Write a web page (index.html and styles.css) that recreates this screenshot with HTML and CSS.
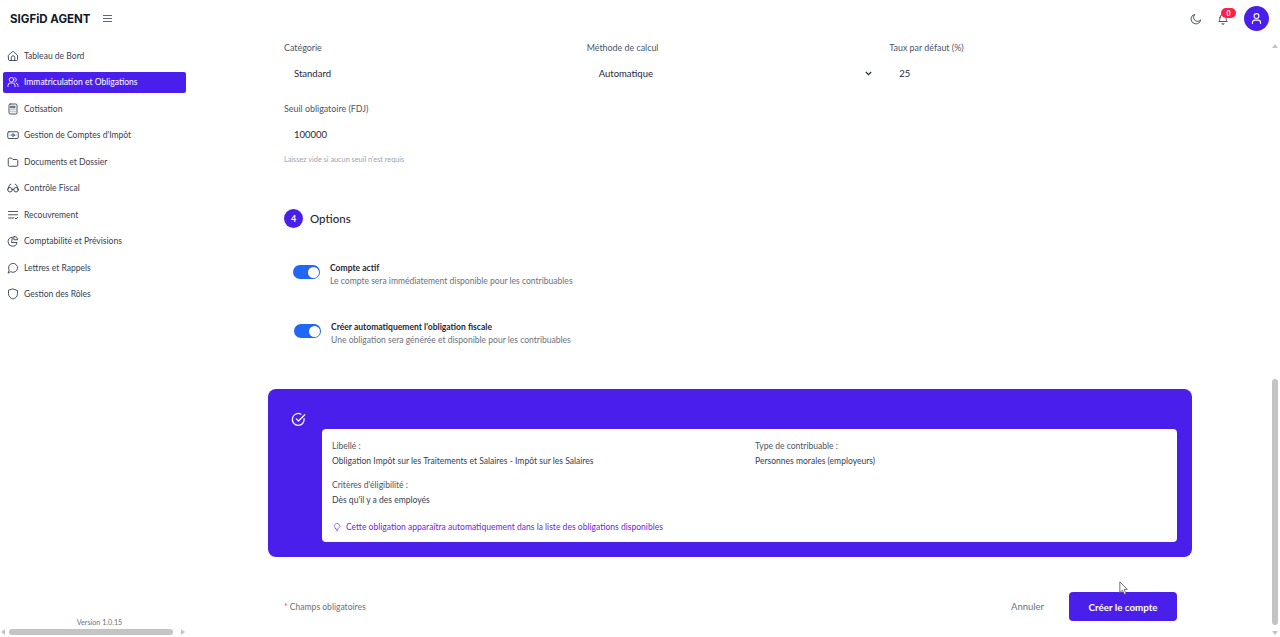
FILE: index.html
```html
<!DOCTYPE html>
<html lang="fr">
<head>
    <meta charset="UTF-8">
    <meta name="viewport" content="width=device-width, initial-scale=1.0">
    <title>SIGFiD Agent</title>
    <link rel="stylesheet" href="styles.css">
</head>
<body>
    <div class="app">
        <!-- Sidebar -->
        <aside class="sidebar">
            <div class="brand">
                <span class="brand-name">SIGFiD AGENT</span>
                <svg class="icon burger" viewBox="0 0 24 24"><path d="M3 5.500h18M3 12h18M3 18.500h18"/></svg>
            </div>
            <nav class="nav">
                <a class="nav-item"><svg class="icon" viewBox="0 0 24 24"><path d="M3 10.500l7.500-7a2.200 2.200 0 0 1 3 0l7.500 7V19a2 2 0 0 1-2 2H5a2 2 0 0 1-2-2z"/><path d="M8.500 21v-6a3.500 3.500 0 0 1 7 0v6"/></svg>Tableau de Bord</a>
                <a class="nav-item active"><svg class="icon" viewBox="0 0 24 24"><circle cx="9" cy="7.500" r="4.500"/><path d="M2 21v-2a5 5 0 0 1 5-5h4a5 5 0 0 1 5 5v2"/><path d="M15.500 3.200a4.500 4.500 0 0 1 0 8.600"/><path d="M18.500 14.300a5 5 0 0 1 3.500 4.700v2"/></svg>Immatriculation et Obligations</a>
                <a class="nav-item"><svg class="icon" viewBox="0 0 24 24"><rect x="4" y="2" width="16" height="20" rx="2.500"/><path d="M8 6.500h8v3H8zM8 13.500h.01M12 13.500h.01M16 13.500h.01M8 17.500h.01M12 17.500h.01M16 17.500h.01"/></svg>Cotisation</a>
                <a class="nav-item"><svg class="icon" viewBox="0 0 24 24"><rect x="1.500" y="5.500" width="21" height="13.500" rx="2.500"/><circle cx="12" cy="12.200" r="2.500"/><path d="M6 12.200h.01M18 12.200h.01"/></svg>Gestion de Comptes d'Impôt</a>
                <a class="nav-item"><svg class="icon" viewBox="0 0 24 24"><path d="M2.500 6a2 2 0 0 1 2-2h4.500l3 3h7.500a2 2 0 0 1 2 2v9.500a2 2 0 0 1-2 2h-15a2 2 0 0 1-2-2z"/></svg>Documents et Dossier</a>
                <a class="nav-item"><svg class="icon" viewBox="0 0 24 24"><circle cx="6" cy="15.500" r="4.500"/><circle cx="18" cy="15.500" r="4.500"/><path d="M10.500 15c1-.8 2-.8 3 0M1.500 15L5 6c.4-1 1.200-1.500 2.500-1.500M22.500 15L19 6c-.4-1-1.200-1.500-2.500-1.500"/></svg>Contrôle Fiscal</a>
                <a class="nav-item"><svg class="icon" viewBox="0 0 24 24"><path d="M3 5h18M3 11.500h18M3 18h10M16 18l2 2 3.500-3.500"/></svg>Recouvrement</a>
                <a class="nav-item"><svg class="icon" viewBox="0 0 24 24"><path d="M10 4.500a9 9 0 1 0 10 10.500H10z"/><path d="M14.500 2.500a7.500 7.500 0 0 1 7 7h-7z"/></svg>Comptabilité et Prévisions</a>
                <a class="nav-item"><svg class="icon" viewBox="0 0 24 24"><path d="M2.500 21.500l1.800-5.200a9 9 0 1 1 3.500 3.400z"/></svg>Lettres et Rappels</a>
                <a class="nav-item"><svg class="icon" viewBox="0 0 24 24"><path d="M12 2l9 3v6.500c0 5.200-3.700 8.900-9 10.500-5.300-1.600-9-5.300-9-10.500V5z"/></svg>Gestion des Rôles</a>
            </nav>
            <div class="version">Version 1.0.15</div>
            <div class="hscroll">
                <span class="arrow arrow-left"></span>
                <span class="hthumb"></span>
                <span class="arrow arrow-right"></span>
            </div>
        </aside>

        <div class="main">
            <!-- Top bar -->
            <header class="topbar">
                <svg class="icon moon" viewBox="0 0 24 24"><path d="M21 14.500A9.500 9.500 0 1 1 9.500 3a7.500 7.500 0 0 0 11.500 11.500z"/></svg>
                <span class="bell">
                    <svg class="icon" viewBox="0 0 24 24"><path d="M6 9a6 6 0 0 1 12 0c0 6 2.500 8 2.500 8h-17S6 15 6 9z"/><path d="M10 21a2 2 0 0 0 4 0"/></svg>
                    <span class="badge">0</span>
                </span>
                <span class="avatar">
                    <svg class="icon" viewBox="0 0 24 24"><circle cx="12" cy="7.500" r="4.500"/><path d="M4.500 21v-1a5 5 0 0 1 5-5h5a5 5 0 0 1 5 5v1"/></svg>
                </span>
            </header>

            <div class="content">
                <div class="form-section">
                    <div class="grid-3">
                        <div class="field">
                            <label>Catégorie</label>
                            <div class="value">Standard</div>
                        </div>
                        <div class="field">
                            <label>Méthode de calcul</label>
                            <div class="value value-select">Automatique
                                <svg class="chevron" viewBox="0 0 24 24"><path d="M5 8l7 7 7-7"/></svg>
                            </div>
                        </div>
                        <div class="field">
                            <label>Taux par défaut (%)</label>
                            <div class="value">25</div>
                        </div>
                    </div>
                    <div class="field threshold">
                        <label>Seuil obligatoire (FDJ)</label>
                        <div class="value">100000</div>
                        <p class="hint">Laissez vide si aucun seuil n'est requis</p>
                    </div>

                    <div class="step">
                        <span class="step-num">4</span>
                        <h2>Options</h2>
                    </div>

                    <div class="option">
                        <span class="toggle"></span>
                        <div>
                            <div class="option-title">Compte actif</div>
                            <div class="option-desc">Le compte sera immédiatement disponible pour les contribuables</div>
                        </div>
                    </div>
                    <div class="option option-second">
                        <span class="toggle"></span>
                        <div>
                            <div class="option-title">Créer automatiquement l'obligation fiscale</div>
                            <div class="option-desc">Une obligation sera générée et disponible pour les contribuables</div>
                        </div>
                    </div>
                </div>

                <!-- Recap panel -->
                <div class="panel">
                    <svg class="icon panel-icon" viewBox="0 0 24 24"><path d="M21 10.500a9.500 9.500 0 1 1-5-7"/><path d="M8.500 11l3.500 3.500L22 4.500"/></svg>
                    <div class="panel-card">
                        <div class="panel-grid">
                            <div>
                                <div class="panel-label">Libellé :</div>
                                <div class="panel-text">Obligation Impôt sur les Traitements et Salaires - Impôt sur les Salaires</div>
                            </div>
                            <div>
                                <div class="panel-label">Type de contribuable :</div>
                                <div class="panel-text">Personnes morales (employeurs)</div>
                            </div>
                        </div>
                        <div class="criteria">
                            <div class="panel-label">Critères d'éligibilité :</div>
                            <div class="panel-text">Dès qu'il y a des employés</div>
                        </div>
                        <div class="panel-note">
                            <svg class="icon" viewBox="0 0 24 24"><path d="M8.500 15.500a6.500 6.500 0 1 1 7 0c-.7.500-1 1-1 2h-5c0-1-.3-1.500-1-2z"/><path d="M10 21h4"/></svg>
                            Cette obligation apparaîtra automatiquement dans la liste des obligations disponibles
                        </div>
                    </div>
                </div>

                <div class="actions">
                    <span class="required"><span class="star">*</span> Champs obligatoires</span>
                    <span class="actions-right">
                        <button class="btn-cancel" type="button">Annuler</button>
                        <button class="btn-submit" type="button">Créer le compte</button>
                    </span>
                </div>
            </div>
        </div>
    </div>

    <!-- Window scrollbar and mouse pointer lie over the page -->
    <div class="vscroll">
        <span class="arrow arrow-up"></span>
        <span class="vthumb"></span>
        <span class="arrow arrow-down"></span>
    </div>
    <svg class="cursor" viewBox="0 0 12 18"><path d="M1 1v13l3-3 2.500 5 2-1-2.500-5h4z"/></svg>
</body>
</html>
```

FILE: styles.css
```css
* {
    box-sizing: border-box;
}
html, body {
    margin: 0;
    height: 100%;
    overflow: hidden;
}
body {
    font-family: Lato, "Open Sans", sans-serif;
    font-size: 8.550px;
    color: #374151;
    background-color: white;
}
.app {
    display: flex;
    height: 637px;
}
.icon {
    width: 12px;
    height: 12px;
    flex: none;
    fill: none;
    stroke: currentColor;
    stroke-width: 1.800;
    stroke-linecap: round;
    stroke-linejoin: round;
}

/* Sidebar */
.sidebar {
    width: 188px;
    flex: none;
    display: flex;
    flex-direction: column;
    padding-left: 3px;
}
.brand {
    display: flex;
    align-items: center;
    gap: 12px;
    height: 37px;
    padding-left: 7px;
}
.brand-name {
    font-family: Inter, sans-serif;
    font-size: 11.500px;
    font-weight: 700;
    color: #111827;
}
.burger {
    width: 11px;
    height: 11px;
    color: #374151;
}
.nav {
    display: flex;
    flex-direction: column;
    gap: 5.440px;
    margin-top: 8.500px;
    width: 183px;
}
.nav-item {
    display: flex;
    align-items: center;
    gap: 5px;
    height: 21px;
    padding-left: 4px;
    border-radius: 2px;
    color: #374151;
}
.nav-item.active {
    background-color: #4a1fec;
    color: white;
}
.version {
    margin-top: auto;
    width: 193px;
    padding-bottom: 2px;
    text-align: center;
    font-size: 7.200px;
    color: #6b7280;
}
.hscroll {
    display: flex;
    align-items: center;
    height: 6px;
    margin: 0 0 2px -3px;
    width: 190px;
    gap: 4px;
    padding-left: 1px;
}
.hthumb {
    width: 164px;
    height: 6px;
    border-radius: 3px;
    background-color: #c4c4c4;
}
.arrow {
    width: 0;
    height: 0;
    border: 3px solid transparent;
    flex: none;
}
.arrow-left {
    border-left-width: 0;
    border-right: 4px solid #c4c4c4;
}
.arrow-right {
    border-right-width: 0;
    border-left: 4px solid #c4c4c4;
    margin-left: 4px;
}

/* Main column */
.main {
    flex: 1;
    min-width: 0;
    display: flex;
    flex-direction: column;
}
.topbar {
    display: flex;
    align-items: center;
    justify-content: flex-end;
    height: 37px;
    padding-right: 11px;
    color: #374151;
}
.moon {
    margin-right: 15px;
}
.bell {
    position: relative;
    display: flex;
    margin-right: 15px;
}
.badge {
    position: absolute;
    top: -5px;
    left: 4px;
    width: 15px;
    height: 10px;
    border-radius: 5px;
    background-color: #ff1f47;
    color: white;
    font-size: 7px;
    font-weight: 700;
    line-height: 10px;
    text-align: center;
}
.avatar {
    display: flex;
    align-items: center;
    justify-content: center;
    width: 25px;
    height: 25px;
    border-radius: 50%;
    background-color: #4a1fec;
    color: white;
}
.avatar .icon {
    width: 13px;
    height: 13px;
    stroke-width: 2;
}
.content {
    padding: 0 88px 0 80px;
}

/* Form */
.form-section {
    padding-left: 16px;
    padding-right: 15px;
}
.grid-3 {
    display: grid;
    grid-template-columns: repeat(3, 1fr);
    column-gap: 15px;
}
.field label {
    display: block;
    height: 11px;
    margin-top: 5px;
    font-size: 8.900px;
    line-height: 11px;
    color: #4b5563;
}
.value {
    display: flex;
    align-items: center;
    justify-content: space-between;
    height: 32px;
    margin-top: 4px;
    padding: 0 1px 0 10px;
    color: #1f2937;
    font-size: 9.500px;
}
.value-select {
    padding-left: 12px;
}
.chevron {
    width: 9px;
    height: 9px;
    fill: none;
    stroke: #1f2937;
    stroke-width: 3;
}
.threshold {
    margin-top: 14px;
}
.hint {
    margin: 5px 0 0;
    font-size: 7.300px;
    color: #9ca3af;
}
.step {
    display: flex;
    align-items: center;
    gap: 7px;
    margin-top: 45px;
}
.step-num {
    display: flex;
    align-items: center;
    justify-content: center;
    width: 19px;
    height: 19px;
    border-radius: 50%;
    background-color: #4a1fec;
    color: white;
    font-size: 9px;
    font-weight: 700;
}
.step h2 {
    margin: 0;
    font-size: 11.500px;
    font-weight: 500;
    color: #1f2937;
}
.option {
    display: flex;
    align-items: center;
    gap: 10px;
    margin-top: 34px;
    padding-left: 9px;
    line-height: 13px;
}
.option-second {
    margin-top: 33px;
    padding-left: 10px;
}
.toggle {
    position: relative;
    width: 27px;
    height: 14px;
    flex: none;
    margin-bottom: 6px;
    border-radius: 7px;
    background-color: #2067f5;
}
.toggle::after {
    content: "";
    position: absolute;
    top: 1.500px;
    right: 1.500px;
    width: 11px;
    height: 11px;
    border-radius: 50%;
    background-color: white;
}
.option-title {
    font-weight: 700;
    color: #1f2937;
}
.option-desc {
    color: #6b7280;
}

/* Recap panel */
.panel {
    display: flex;
    align-items: flex-start;
    gap: 16px;
    height: 168px;
    margin-top: 42px;
    padding: 23px 15px 15px 23px;
    border-radius: 8px;
    background-color: #4a1fec;
}
.panel-icon {
    width: 15px;
    height: 15px;
    color: white;
    stroke-width: 2;
}
.panel-card {
    flex: 1;
    height: 113px;
    margin-top: 17px;
    padding: 11px 10px;
    border-radius: 4px;
    background-color: white;
    line-height: 12px;
}
.panel-grid {
    display: grid;
    grid-template-columns: 423px 1fr;
}
.panel-label {
    color: #4b5563;
}
.panel-text {
    margin-top: 3px;
    color: #374151;
}
.criteria {
    margin-top: 12px;
}
.panel-note {
    display: flex;
    align-items: center;
    gap: 4px;
    margin-top: 15px;
    color: #6d28d9;
}
.panel-note .icon {
    width: 10px;
    height: 10px;
    stroke-width: 1.500;
}

/* Footer actions */
.actions {
    display: flex;
    align-items: center;
    justify-content: space-between;
    margin-top: 35px;
    padding: 0 15px 0 16px;
}
.required {
    color: #6b7280;
}
.star {
    color: #ef4444;
}
.actions-right {
    display: flex;
    align-items: center;
    gap: 25px;
}
.btn-cancel {
    padding: 0;
    border: none;
    background: none;
    font: inherit;
    font-size: 9.500px;
    color: #6b7280;
}
.btn-submit {
    width: 108px;
    height: 29px;
    border: none;
    border-radius: 4px;
    background-color: #4a1fec;
    color: white;
    font: inherit;
    font-size: 9.800px;
    font-weight: 700;
}

/* Window scrollbar */
.vscroll {
    position: absolute;
    top: 44px;
    right: 2px;
    bottom: 2px;
    width: 6px;
    display: flex;
    flex-direction: column;
    align-items: center;
}
.arrow-up {
    border-top-width: 0;
    border-bottom: 4px solid #c4c4c4;
}
.arrow-down {
    border-bottom-width: 0;
    border-top: 4px solid #c4c4c4;
    margin-top: auto;
}
.vthumb {
    width: 6px;
    height: 246px;
    margin-top: 331px;
    border-radius: 3px;
    background-color: #c4c4c4;
}
.cursor {
    position: absolute;
    left: 1119px;
    top: 581px;
    width: 10px;
    height: 15px;
    fill: white;
    stroke: #555;
    stroke-width: 1;
}
```
